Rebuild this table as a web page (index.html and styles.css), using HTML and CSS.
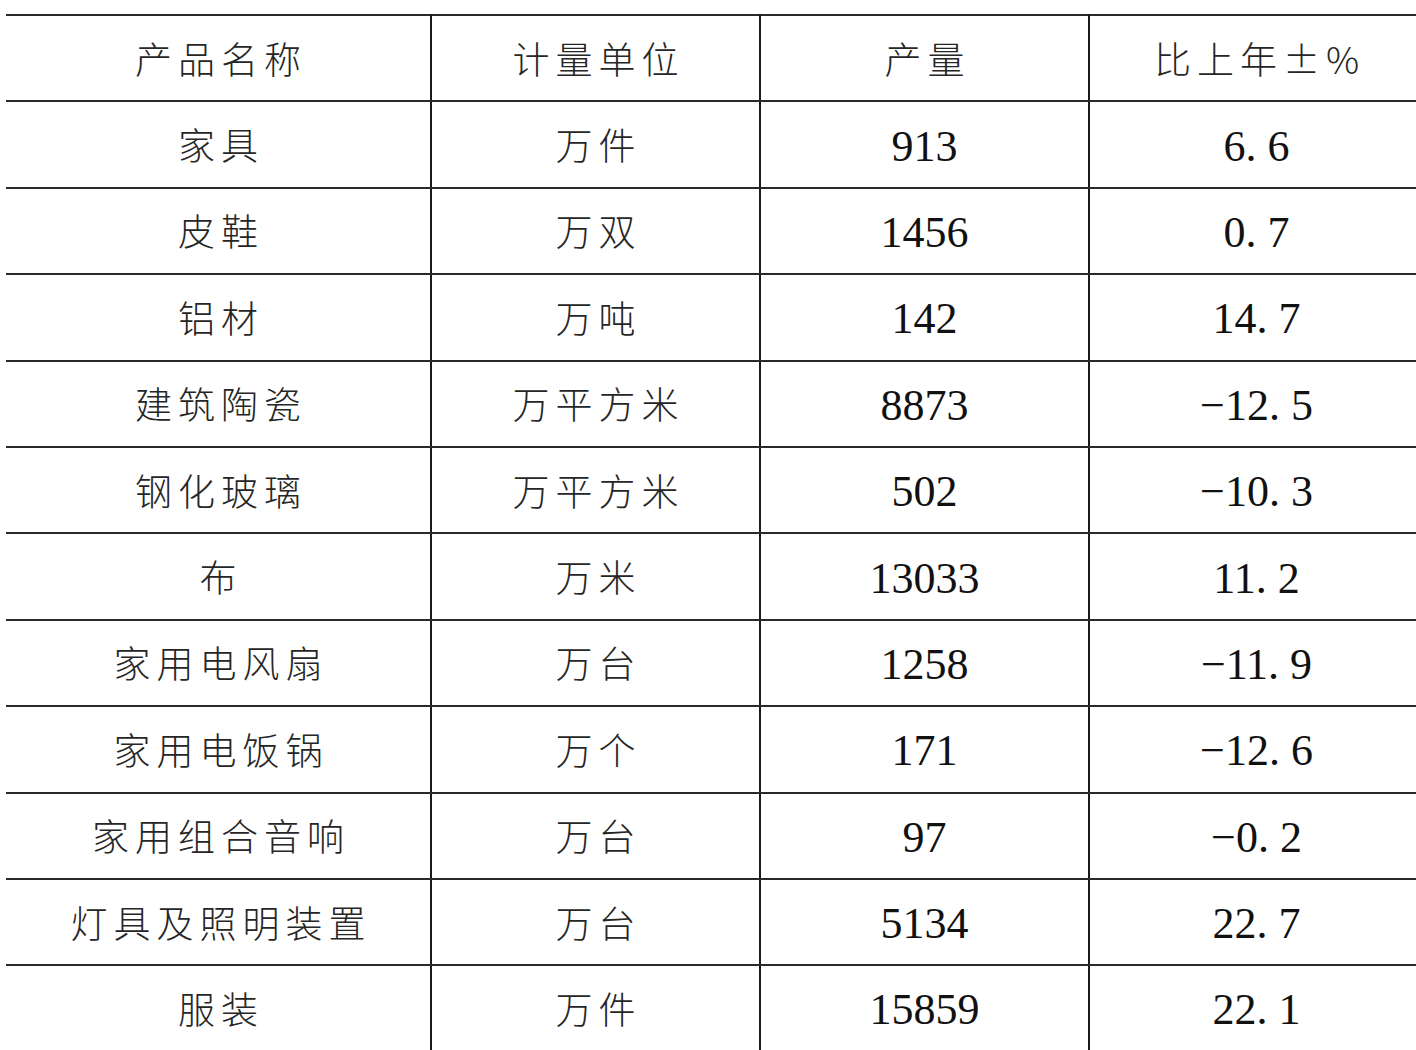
FILE: index.html
```html
<!DOCTYPE html>
<html lang="zh-CN">
<head>
<meta charset="utf-8">
<title>主要工业产品产量</title>
<link rel="stylesheet" href="styles.css">
</head>
<body>
<table class="stats">
  <colgroup>
    <col class="c1"><col class="c2"><col class="c3"><col class="c4">
  </colgroup>
  <thead>
    <tr>
      <th class="zh">产品名称</th>
      <th class="zh">计量单位</th>
      <th class="zh">产量</th>
      <th class="zh">比上年±%</th>
    </tr>
  </thead>
  <tbody>
    <tr><td class="zh">家具</td><td class="zh">万件</td><td class="num">913</td><td class="num">6<span class="dot">.</span>6</td></tr>
    <tr><td class="zh">皮鞋</td><td class="zh">万双</td><td class="num">1456</td><td class="num">0<span class="dot">.</span>7</td></tr>
    <tr><td class="zh">铝材</td><td class="zh">万吨</td><td class="num">142</td><td class="num">14<span class="dot">.</span>7</td></tr>
    <tr><td class="zh">建筑陶瓷</td><td class="zh">万平方米</td><td class="num">8873</td><td class="num">−12<span class="dot">.</span>5</td></tr>
    <tr><td class="zh">钢化玻璃</td><td class="zh">万平方米</td><td class="num">502</td><td class="num">−10<span class="dot">.</span>3</td></tr>
    <tr><td class="zh">布</td><td class="zh">万米</td><td class="num">13033</td><td class="num">11<span class="dot">.</span>2</td></tr>
    <tr><td class="zh">家用电风扇</td><td class="zh">万台</td><td class="num">1258</td><td class="num">−11<span class="dot">.</span>9</td></tr>
    <tr><td class="zh">家用电饭锅</td><td class="zh">万个</td><td class="num">171</td><td class="num">−12<span class="dot">.</span>6</td></tr>
    <tr><td class="zh">家用组合音响</td><td class="zh">万台</td><td class="num">97</td><td class="num">−0<span class="dot">.</span>2</td></tr>
    <tr><td class="zh">灯具及照明装置</td><td class="zh">万台</td><td class="num">5134</td><td class="num">22<span class="dot">.</span>7</td></tr>
    <tr><td class="zh">服装</td><td class="zh">万件</td><td class="num">15859</td><td class="num">22<span class="dot">.</span>1</td></tr>
  </tbody>
</table>
</body>
</html>
```

FILE: styles.css
```css
html, body {
  margin: 0;
  padding: 0;
  background: #ffffff;
}

body {
  padding: 14px 0 0 6px;
  width: 1430px;
  overflow: hidden;
}

.stats {
  border-collapse: collapse;
  table-layout: fixed;
  width: 1417px;
  border-top: 2px solid #2a2a2a;
  color: #111111;
}

.c1 { width: 425px; }
.c2 { width: 329px; }
.c3 { width: 329px; }
.c4 { width: 334px; }

.stats tr {
  height: 86.4px;
}

.stats th,
.stats td {
  padding: 0;
  text-align: center;
  vertical-align: middle;
  border-bottom: 2px solid #2a2a2a;
  border-left: 2px solid #1a1a1a;
  font-weight: normal;
  line-height: 1;
}

.stats th:first-child,
.stats td:first-child {
  border-left: none;
}

.zh {
  font-family: "Noto Sans CJK SC Light", "Noto Sans CJK SC DemiLight", "Noto Sans CJK SC", "Noto Sans CJK JP", sans-serif;
  font-weight: 300;
  font-size: 37px;
  letter-spacing: 6px;
  text-indent: 6px;
  color: #262626;
}

.num {
  font-family: "Liberation Serif", "DejaVu Serif", serif;
  font-size: 44px;
  padding-top: 4px;
}

.stats td.num {
  padding-top: 4px;
}

.dot {
  padding-right: 0.25em;
}
```
